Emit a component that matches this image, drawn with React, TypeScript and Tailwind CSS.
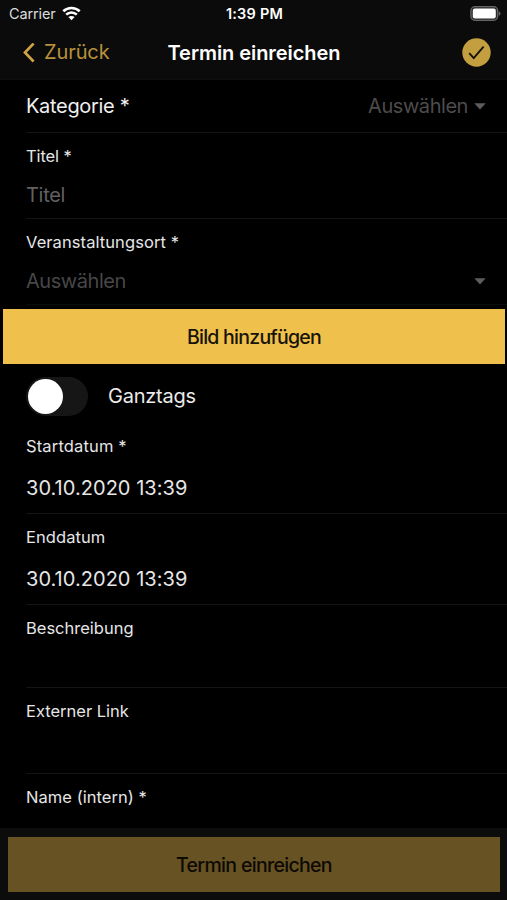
import { useState } from 'react';

interface FieldProps {
  label: string;
  labelClass?: string;
  className: string;
  children?: React.ReactNode;
}

function Caret() {
  return (
    <svg width="12" height="7" viewBox="0 0 12 7" className="shrink-0 fill-[#5c5c5c]">
      <path d="M0.3 0.3h11.4L6 6.5z" />
    </svg>
  );
}

function StatusBar() {
  return (
    <div className="h-[27px] grid grid-cols-[1fr_auto_1fr] items-center pl-[8px] pr-[6px] text-white">
      <div className="pl-px flex items-center gap-[6px]">
        <span className="text-[14.5px] leading-5 text-[#dcdcdc] tracking-[-0.01em]">Carrier</span>
        <svg width="19" height="15" viewBox="0 0 19 15" fill="none" stroke="#fff" strokeWidth="2.6">
          <path d="M1.3 5.3C5.9 0.8 13.1 0.8 17.7 5.3" />
          <path d="M4.2 8.6C7.2 5.7 11.8 5.7 14.8 8.6" />
          <path d="M9.5 14.2L6.4 11C8.2 9.5 10.8 9.5 12.6 11z" fill="#fff" stroke="none" />
        </svg>
      </div>
      <span className="text-[14.5px] leading-5 font-semibold tracking-[0.2px] whitespace-nowrap">1:39 PM</span>
      <svg width="31" height="15" viewBox="0 0 31 15" className="justify-self-end">
        <rect x="0.9" y="0.7" width="26.8" height="13.6" rx="4" fill="#2b2b2b" stroke="#666" strokeWidth="1.3" />
        <rect x="2.8" y="2.6" width="23" height="9.8" rx="2.2" fill="#fff" />
        <path d="M28.8 5.2c2.2 0.8 2.2 3.8 0 4.6z" fill="#666" />
      </svg>
    </div>
  );
}

function NavBar() {
  return (
    <div className="h-[51px] grid grid-cols-[1fr_auto_1fr] items-center pl-[17px] pr-4">
      <button className="ml-[6px] flex items-center gap-[9px] text-[#b8923a]">
        <svg width="12" height="20" viewBox="0 0 12 20" fill="none" stroke="#d0a441" strokeWidth="2.6">
          <path d="M10.6 0.5L1.9 9.5l8.7 9" />
        </svg>
        <span className="text-[20px] leading-6 pb-px tracking-[-0.1px]">Zurück</span>
      </button>
      <h1 className="text-[20px] leading-6 font-semibold tracking-[-0.06px] text-white">Termin einreichen</h1>
      <button className="justify-self-end">
        <svg width="29" height="29" viewBox="0 0 29 29">
          <circle cx="14.5" cy="14.5" r="14.2" fill="#c39f40" />
          <path d="M7.2 15.2l4.5 4.9L21.6 8.6" fill="none" stroke="#17130a" strokeWidth="1.9" />
        </svg>
      </button>
    </div>
  );
}

function Field({ label, labelClass = '', className, children }: FieldProps) {
  return (
    <div className={`ml-[26px] border-b ${className}`}>
      <div className={`text-[16.5px] leading-5 text-[#e6e6e6] ${labelClass}`}>{label}</div>
      {children}
    </div>
  );
}

export default function App() {
  const [allDay, setAllDay] = useState(false);

  return (
    <div className="h-[900px] flex flex-col overflow-hidden bg-black font-['Inter','Liberation_Sans',sans-serif]">
      <header className="shrink-0 h-20 bg-[#0b0b0b] border-b border-[#0e0e0e]">
        <StatusBar />
        <NavBar />
      </header>

      <main className="flex-1 min-h-0 overflow-hidden">
        <div className="ml-[26px] h-[53px] pr-[21px] flex items-center justify-between border-b border-[#141414] text-[20px] leading-6">
          <span className="tracking-[-0.32px] text-[#f0f0f0]">Kategorie *</span>
          <span className="flex items-center gap-[6px] tracking-[-0.45px] text-[#4c4c4c]">
            Auswählen
            <Caret />
          </span>
        </div>

        <Field label="Titel *" labelClass="tracking-[-0.1px]" className="h-[86px] pt-[13px] border-[#141414]">
          <div className="mt-[17px] text-[20px] leading-6 tracking-[-0.3px] text-[#626262]">Titel</div>
        </Field>

        <Field label="Veranstaltungsort *" labelClass="tracking-[0.08px]" className="h-[86px] pt-[13px] border-[#0c0c0c]">
          <div className="mt-[17px] pr-[21px] flex items-center justify-between text-[20px] leading-6 tracking-[-0.45px] text-[#474747]">
            Auswählen
            <Caret />
          </div>
        </Field>

        <button className="block mt-1 ml-[3px] w-[502px] h-[55px] pt-[3px] bg-[#efc04b] text-[19.5px] font-[450] tracking-[-0.75px] text-[#17130a]">
          Bild hinzufügen
        </button>

        <div className="h-[65px] pl-[26px] flex items-center gap-5">
          <button
            role="switch"
            aria-checked={allDay}
            onClick={() => setAllDay(!allDay)}
            className={`w-[62px] h-[39px] rounded-full p-[2px] flex items-center ${
              allDay ? 'bg-[#efc04b] justify-end' : 'bg-[#161616]'
            }`}
          >
            <span className="size-[35px] rounded-full bg-white" />
          </button>
          <span className="text-[20px] leading-6 pb-px tracking-[-0.25px] text-[#ebebeb]">Ganztags</span>
        </div>

        <Field label="Startdatum *" labelClass="tracking-[0.15px]" className="h-[85px] pt-[7px] border-[#141414]">
          <div className="mt-[20px] text-[20px] leading-6 tracking-[0.04px] text-[#e6e6e6]">30.10.2020 13:39</div>
        </Field>

        <Field label="Enddatum" labelClass="tracking-[0.08px]" className="h-[91px] pt-[13px] border-[#141414]">
          <div className="mt-[20px] text-[20px] leading-6 tracking-[0.04px] text-[#e6e6e6]">30.10.2020 13:39</div>
        </Field>

        <Field label="Beschreibung" className="h-[83px] pt-[13px] border-[#141414]" />
        <Field label="Externer Link" className="h-[86px] pt-[13px] border-[#141414]" />
        <Field label="Name (intern) *" labelClass="tracking-[0.05px]" className="h-[86px] pt-[13px] border-[#141414]" />
      </main>

      <footer className="shrink-0 h-[72px] pt-[9px] pl-2 bg-[#0c0c0c]">
        <button className="block w-[492px] h-[55px] pt-[3px] bg-[#665223] text-[19.5px] font-[450] tracking-[-0.68px] text-[#0d0a04]">
          Termin einreichen
        </button>
      </footer>
    </div>
  );
}
